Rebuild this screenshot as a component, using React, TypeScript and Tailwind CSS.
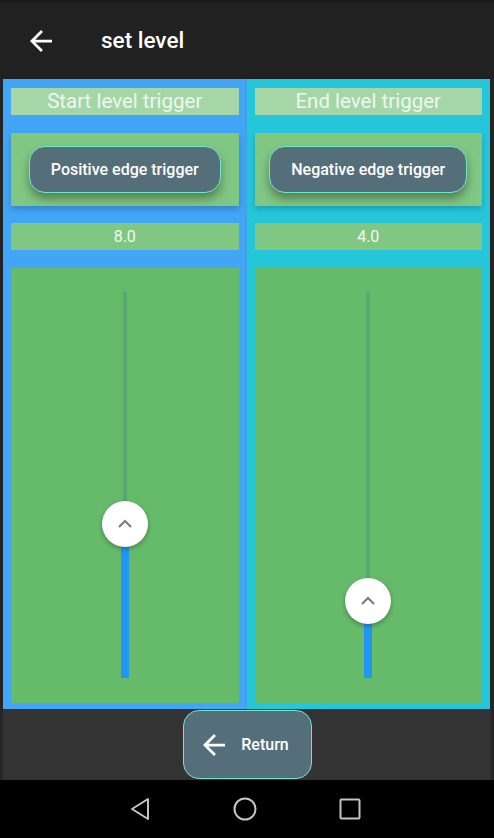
import React from "react";

const font = { fontFamily: "Roboto, 'Noto Sans', Arial, sans-serif" };

function BackArrow({ className }: { className?: string }) {
  return (
    <svg viewBox="4 4 16 16" width={22} height={22} className={className}>
      <path
        fill="white"
        d="M20 11H7.83l5.59-5.59L12 4l-8 8 8 8 1.41-1.41L7.83 13H20v-2z"
      />
    </svg>
  );
}

function Column({
  title,
  button,
  value,
  fraction,
  bg,
}: {
  title: string;
  button: string;
  value: string;
  fraction: number;
  bg: string;
}) {
  const trackH = 386;
  const active = fraction * trackH;
  return (
    <div className={`flex-1 flex flex-col px-2 pt-[9px] pb-[6px] ${bg} shadow-[0_0_4px_rgba(0,0,0,0.08)]`}>
      <div className="h-[27px] bg-[#a5d6a7] flex items-center justify-center text-[20.5px] text-[#eef7ee] leading-none">
        {title}
      </div>
      <div className="mt-[18px] h-[73px] bg-[#81c784] flex items-center justify-center shadow-[0_3px_6px_rgba(0,0,0,0.2)]">
        <div className="h-[47px] px-[21px] rounded-[16px] bg-[#546e7a] border border-[#6ee7c8] flex items-center justify-center text-white text-[16px] font-medium shadow-[0_6px_10px_rgba(0,0,0,0.35)]">
          {button}
        </div>
      </div>
      <div className="mt-[17px] h-[27px] bg-[#81c784] flex items-center justify-center text-[16px] text-[#f1f8f1]">
        {value}
      </div>
      <div className="mt-[18px] flex-1 bg-[#66bb6a] flex justify-center pt-[24px] pb-[25px]">
        <div className="relative w-[8px] flex flex-col items-center">
          <div className="flex-1 w-[4px] bg-[#5aa772]" />
          <div className="w-[8px] bg-[#2196f3]" style={{ height: active }} />
          <div
            className="absolute left-1/2 -translate-x-1/2 w-[46px] h-[46px] rounded-full bg-white shadow-[0_2px_5px_rgba(0,0,0,0.3)] flex items-center justify-center"
            style={{ bottom: active - 23 }}
          >
            <svg width="16" height="10" viewBox="0 0 16 10">
              <polyline
                points="2,8 8,2 14,8"
                fill="none"
                stroke="#7a7a7a"
                strokeWidth="2"
              />
            </svg>
          </div>
        </div>
      </div>
    </div>
  );
}

export default function App() {
  return (
    <div className="w-[494px] h-[838px] bg-[#262626] flex flex-col overflow-hidden" style={font}>
      <div className="h-[79px] bg-[#212121] flex items-center shrink-0 border-t-[3px] border-[#1a1a1a]">
        <BackArrow className="ml-[30px]" />
        <div className="ml-[49px] text-white text-[22.5px] font-medium">set level</div>
      </div>
      <div className="h-[630px] flex ml-[3px] mr-[4px] shrink-0">
        <Column
          title="Start level trigger"
          button="Positive edge trigger"
          value="8.0"
          fraction={0.4}
          bg="bg-[#42a5f5]"
        />
        <Column
          title="End level trigger"
          button="Negative edge trigger"
          value="4.0"
          fraction={0.2}
          bg="bg-[#26c6da]"
        />
      </div>
      <div className="h-[71px] bg-[#333333] ml-[3px] mr-[3px] flex items-center justify-center shrink-0">
        <div className="w-[129px] h-[69px] rounded-[16px] bg-[#546e7a] border border-[#6ee7c8] flex items-center justify-center gap-[16px] pr-[2px]">
          <BackArrow />
          <span className="text-white text-[16px] font-medium">Return</span>
        </div>
      </div>
      <div className="flex-1 bg-black flex items-center justify-center gap-[82px] pr-[4px]">
        <svg width="22" height="24" viewBox="0 0 22 24">
          <polygon points="19,2 19,22 3,12" fill="none" stroke="#c4c4c4" strokeWidth="2" strokeLinejoin="round" />
        </svg>
        <svg width="24" height="24" viewBox="0 0 24 24">
          <circle cx="12" cy="12" r="10.5" fill="none" stroke="#c4c4c4" strokeWidth="2" />
        </svg>
        <svg width="22" height="22" viewBox="0 0 22 22">
          <rect x="1.5" y="1.5" width="19" height="19" rx="1" fill="none" stroke="#c4c4c4" strokeWidth="2" />
        </svg>
      </div>
    </div>
  );
}
